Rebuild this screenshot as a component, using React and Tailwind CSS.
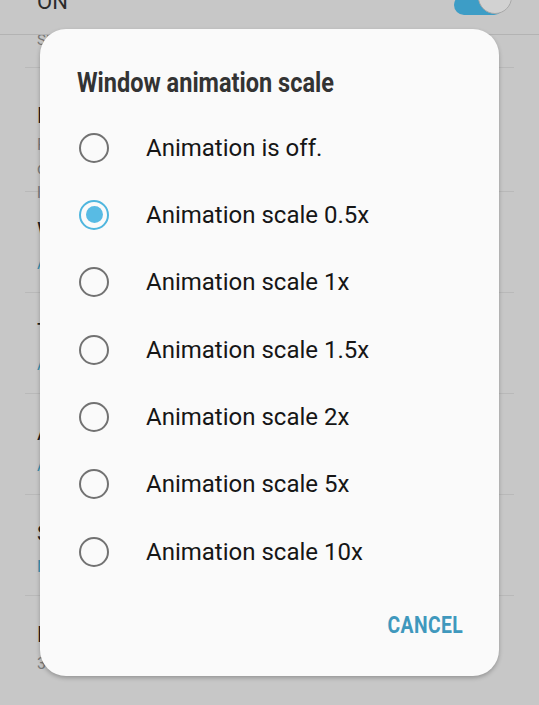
import React from 'react';

const options = [
  'Animation is off.',
  'Animation scale 0.5x',
  'Animation scale 1x',
  'Animation scale 1.5x',
  'Animation scale 2x',
  'Animation scale 5x',
  'Animation scale 10x',
];

const settings = [
  { title: 'Force RTL layout direction', sub: 'Force screen layout direction to RTL for all locales.', tall: true },
  { title: 'Window animation scale', sub: 'Animation scale 0.5x', blue: true },
  { title: 'Transition animation scale', sub: 'Animation scale 0.5x', blue: true },
  { title: 'Animator duration scale', sub: 'Animation scale 0.5x', blue: true },
  { title: 'Simulate secondary displays', sub: 'None', blue: true },
  { title: 'Minimum width', sub: '360 dp' },
];

const Radio = ({ checked }) =>
  checked ? (
    <div className="w-[30px] h-[30px] rounded-full border-2 border-[#4fb6de] flex items-center justify-center">
      <div className="w-[17px] h-[17px] rounded-full bg-[#58bbe4]"></div>
    </div>
  ) : (
    <div className="w-[30px] h-[30px] rounded-full border-2 border-[#727272]"></div>
  );

export default function App() {
  return (
    <div
      className="relative w-[539px] h-[705px] overflow-hidden bg-[#c7c7c7]"
      style={{ fontFamily: 'Roboto, "Noto Sans", sans-serif' }}
    >
      {/* dimmed settings screen behind */}
      <div className="h-[35px] border-b border-[#b3b3b3] flex items-start justify-between px-[37px] overflow-hidden">
        <span className="text-[22px] leading-none text-[#2b2b2b] -mt-[9px]">ON</span>
        <div className="relative w-[58px] h-[20px] -mt-[5px] mr-[-10px]">
          <div className="absolute left-0 top-0 w-[50px] h-[20px] rounded-full bg-[#3d9dc6]"></div>
          <div className="absolute right-0 -top-[15px] w-[34px] h-[34px] rounded-full bg-[#d2d2d2] border border-[#a8a8a8]"></div>
        </div>
      </div>
      <div className="h-[32px] px-[37px] overflow-hidden">
        <div className="text-[15px] text-[#777] -mt-[6px]">Show layout bounds on screen</div>
      </div>
      {settings.map((s, i) => (
        <div key={i} className="mx-[25px] border-t border-[#b9b9b9]">
          <div className={`px-[12px] flex flex-col ${s.tall ? 'h-[123px] pt-[33px]' : 'h-[100px] pt-[24px]'}`}>
            <div className="text-[22px] leading-[30px] text-[#1e1e1e]">{s.title}</div>
            <div className={`text-[16px] leading-[24px] ${s.blue ? 'text-[#3b8fae] mt-[6px]' : 'text-[#7a7a7a] mt-[2px] w-[180px]'}`}>
              {s.sub}
            </div>
          </div>
        </div>
      ))}

      {/* dialog */}
      <div className="absolute left-[40px] top-[29px] w-[459px] h-[647px] rounded-[26px] bg-[#fafafa] shadow-[0_2px_4px_rgba(0,0,0,0.25)] flex flex-col">
        <div className="pl-[37px] pt-[39px] h-[85px]">
          <div className="inline-block origin-left scale-x-[0.84] text-[28px] leading-[30px] font-bold text-[#333333] whitespace-nowrap">
            Window animation scale
          </div>
        </div>
        <div className="flex flex-col">
          {options.map((o, i) => (
            <div key={i} className="h-[67.33px] flex items-center pl-[39px]">
              <Radio checked={i === 1} />
              <span className="ml-[37px] text-[24px] text-[#161616] leading-none">{o}</span>
            </div>
          ))}
        </div>
        <div className="flex justify-end pr-[36px] mt-[26px]">
          <div className="inline-block origin-right scale-x-[0.84] text-[23px] leading-[30px] font-bold text-[#3f98bd] tracking-[0.5px]">
            CANCEL
          </div>
        </div>
      </div>
    </div>
  );
}
